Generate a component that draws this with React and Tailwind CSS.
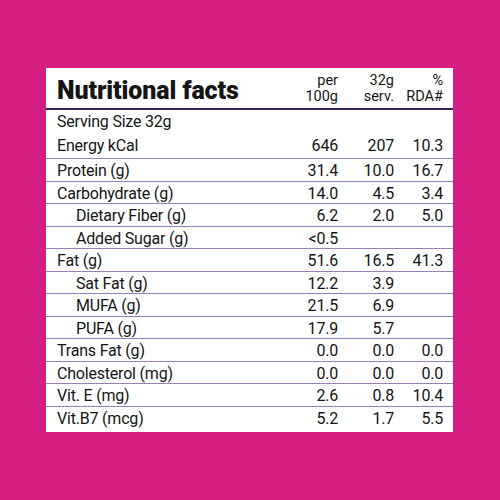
const rows = [
  { label: "Protein (g)", a: "31.4", b: "10.0", c: "16.7" },
  { label: "Carbohydrate (g)", a: "14.0", b: "4.5", c: "3.4" },
  { label: "Dietary Fiber (g)", a: "6.2", b: "2.0", c: "5.0", sub: true },
  { label: "Added Sugar (g)", a: "<0.5", b: "", c: "", sub: true },
  { label: "Fat (g)", a: "51.6", b: "16.5", c: "41.3" },
  { label: "Sat Fat (g)", a: "12.2", b: "3.9", c: "", sub: true },
  { label: "MUFA (g)", a: "21.5", b: "6.9", c: "", sub: true },
  { label: "PUFA (g)", a: "17.9", b: "5.7", c: "", sub: true },
  { label: "Trans Fat (g)", a: "0.0", b: "0.0", c: "0.0" },
  { label: "Cholesterol (mg)", a: "0.0", b: "0.0", c: "0.0" },
  { label: "Vit. E (mg)", a: "2.6", b: "0.8", c: "10.4" },
  { label: "Vit.B7 (mcg)", a: "5.2", b: "1.7", c: "5.5" },
];

const grid = "grid grid-cols-[1fr_56px_56px_49px] pl-[11px] pr-[10px] items-center";

export default function App() {
  return (
    <div className="w-[500px] h-[500px] bg-[#d51e82] pt-[68px] pl-[46px] font-['Roboto',sans-serif] text-[#151515]">
      <div className="w-[407px] h-[364px] bg-white">
        <div className={`${grid} h-[42px] border-b-2 border-[#3c2056]`}>
          <div className="font-black text-[25px] leading-[30px] tracking-[-0.1px] pt-[6px]">Nutritional facts</div>
          <div className="text-right text-[14.5px] leading-[16px] pt-[2px]">per<br />100g</div>
          <div className="text-right text-[14.5px] leading-[16px] pt-[2px]">32g<br />serv.</div>
          <div className="text-right text-[14.5px] leading-[16px] pt-[2px]">%<br />RDA#</div>
        </div>
        <div className="text-[16px] tracking-[-0.2px]">
          <div className={`${grid} h-[24px]`}>
            <div>Serving Size 32g</div>
          </div>
          <div className={`${grid} h-[25px] border-b border-[#9a80b4]`}>
            <div>Energy kCal</div>
            <div className="text-right">646</div>
            <div className="text-right">207</div>
            <div className="text-right">10.3</div>
          </div>
          {rows.map((r, i) => (
            <div
              key={r.label}
              className={`${grid} h-[22.5px] ${i < rows.length - 1 ? "border-b border-[#9a80b4]" : ""}`}
            >
              <div className={r.sub ? "pl-[19px]" : ""}>{r.label}</div>
              <div className="text-right">{r.a}</div>
              <div className="text-right">{r.b}</div>
              <div className="text-right">{r.c}</div>
            </div>
          ))}
        </div>
      </div>
    </div>
  );
}
